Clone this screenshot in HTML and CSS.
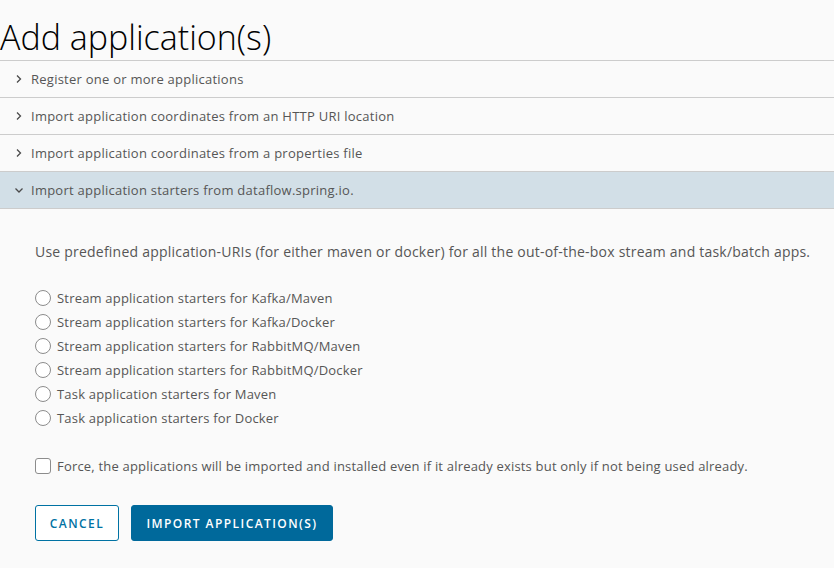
FILE: index.html
```html
<!DOCTYPE html>
<html>
<head>
<meta charset="utf-8">
<link rel="stylesheet" href="styles.css">
</head>
<body>
<h1 class="title">Add application(s)</h1>
<div class="accordion">
  <div class="acc-row">
    <svg class="chev" viewBox="0 0 10 10"><path d="M3 1.5 L6.5 5 L3 8.5" /></svg>
    <span>Register one or more applications</span>
  </div>
  <div class="acc-row">
    <svg class="chev" viewBox="0 0 10 10"><path d="M3 1.5 L6.5 5 L3 8.5" /></svg>
    <span>Import application coordinates from an HTTP URI location</span>
  </div>
  <div class="acc-row">
    <svg class="chev" viewBox="0 0 10 10"><path d="M3 1.5 L6.5 5 L3 8.5" /></svg>
    <span>Import application coordinates from a properties file</span>
  </div>
  <div class="acc-row active">
    <svg class="chev" viewBox="0 0 10 10"><path d="M1.5 3.5 L5 7 L8.5 3.5" /></svg>
    <span>Import application starters from dataflow.spring.io.</span>
  </div>
</div>
<div class="panel">
  <p class="desc">Use predefined application-URIs (for either maven or docker) for all the out-of-the-box stream and task/batch apps.</p>
  <div class="radios">
    <label class="opt"><input type="radio" name="s" class="radio"><span>Stream application starters for Kafka/Maven</span></label>
    <label class="opt"><input type="radio" name="s" class="radio"><span>Stream application starters for Kafka/Docker</span></label>
    <label class="opt"><input type="radio" name="s" class="radio"><span>Stream application starters for RabbitMQ/Maven</span></label>
    <label class="opt"><input type="radio" name="s" class="radio"><span>Stream application starters for RabbitMQ/Docker</span></label>
    <label class="opt"><input type="radio" name="s" class="radio"><span>Task application starters for Maven</span></label>
    <label class="opt"><input type="radio" name="s" class="radio"><span>Task application starters for Docker</span></label>
  </div>
  <label class="opt force"><input type="checkbox" class="check"><span>Force, the applications will be imported and installed even if it already exists but only if not being used already.</span></label>
  <div class="actions">
    <button class="btn btn-outline">Cancel</button>
    <button class="btn btn-primary">Import application(s)</button>
  </div>
</div>
</body>
</html>
```

FILE: styles.css
```css
* { box-sizing: border-box; }
html, body { margin: 0; padding: 0; background: #fafafa; }
body {
  font-family: "Open Sans", "Lato", sans-serif;
  color: #565656;
  width: 834px;
  height: 568px;
  overflow: hidden;
}
.title {
  margin: 17px 0 3px 0;
  font-size: 34px;
  line-height: 40px;
  font-weight: 300;
  color: #000;
  letter-spacing: 0;
}
.accordion { border-top: 1px solid #cccccc; }
.acc-row {
  height: 37px;
  border-bottom: 1px solid #cccccc;
  display: flex;
  align-items: center;
  padding-left: 14px;
  font-size: 13px;
  letter-spacing: 0.25px;
  color: #565656;
}
.acc-row.active { background: #d2dfe7; }
.chev {
  width: 10px;
  height: 10px;
  margin-right: 7px;
  fill: none;
  stroke: #4a4a4a;
  stroke-width: 1.3;
}
.panel { padding: 33px 0 0 35px; }
.desc {
  margin: 0 0 24px 0;
  font-size: 14px;
  line-height: 20px;
  letter-spacing: 0.22px;
  color: #565656;
}
.radios { display: flex; flex-direction: column; }
.opt {
  display: flex;
  align-items: center;
  height: 24px;
  font-size: 13px;
  letter-spacing: 0.19px;
  color: #565656;
  gap: 6px;
}
.radio, .check {
  -webkit-appearance: none;
  appearance: none;
  margin: 0;
  width: 16px;
  height: 16px;
  border: 1px solid #8c8c8c;
  background: #fff;
  flex: none;
}
.radio { border-radius: 50%; }
.check { border-radius: 3px; }
.force { margin-top: 24px; }
.actions {
  display: flex;
  gap: 12px;
  margin-top: 27px;
}
.btn {
  height: 36px;
  padding: 0 12px;
  font-family: inherit;
  font-size: 12px;
  font-weight: 600;
  letter-spacing: 0.12em;
  text-transform: uppercase;
  border-radius: 3px;
  cursor: pointer;
}
.btn-outline {
  background: #fff;
  color: #0072a3;
  border: 1px solid #0072a3;
  width: 84px;
}
.btn-primary {
  background: #00699b;
  color: #fff;
  border: 1px solid #00699b;
  width: 202px;
}
```
